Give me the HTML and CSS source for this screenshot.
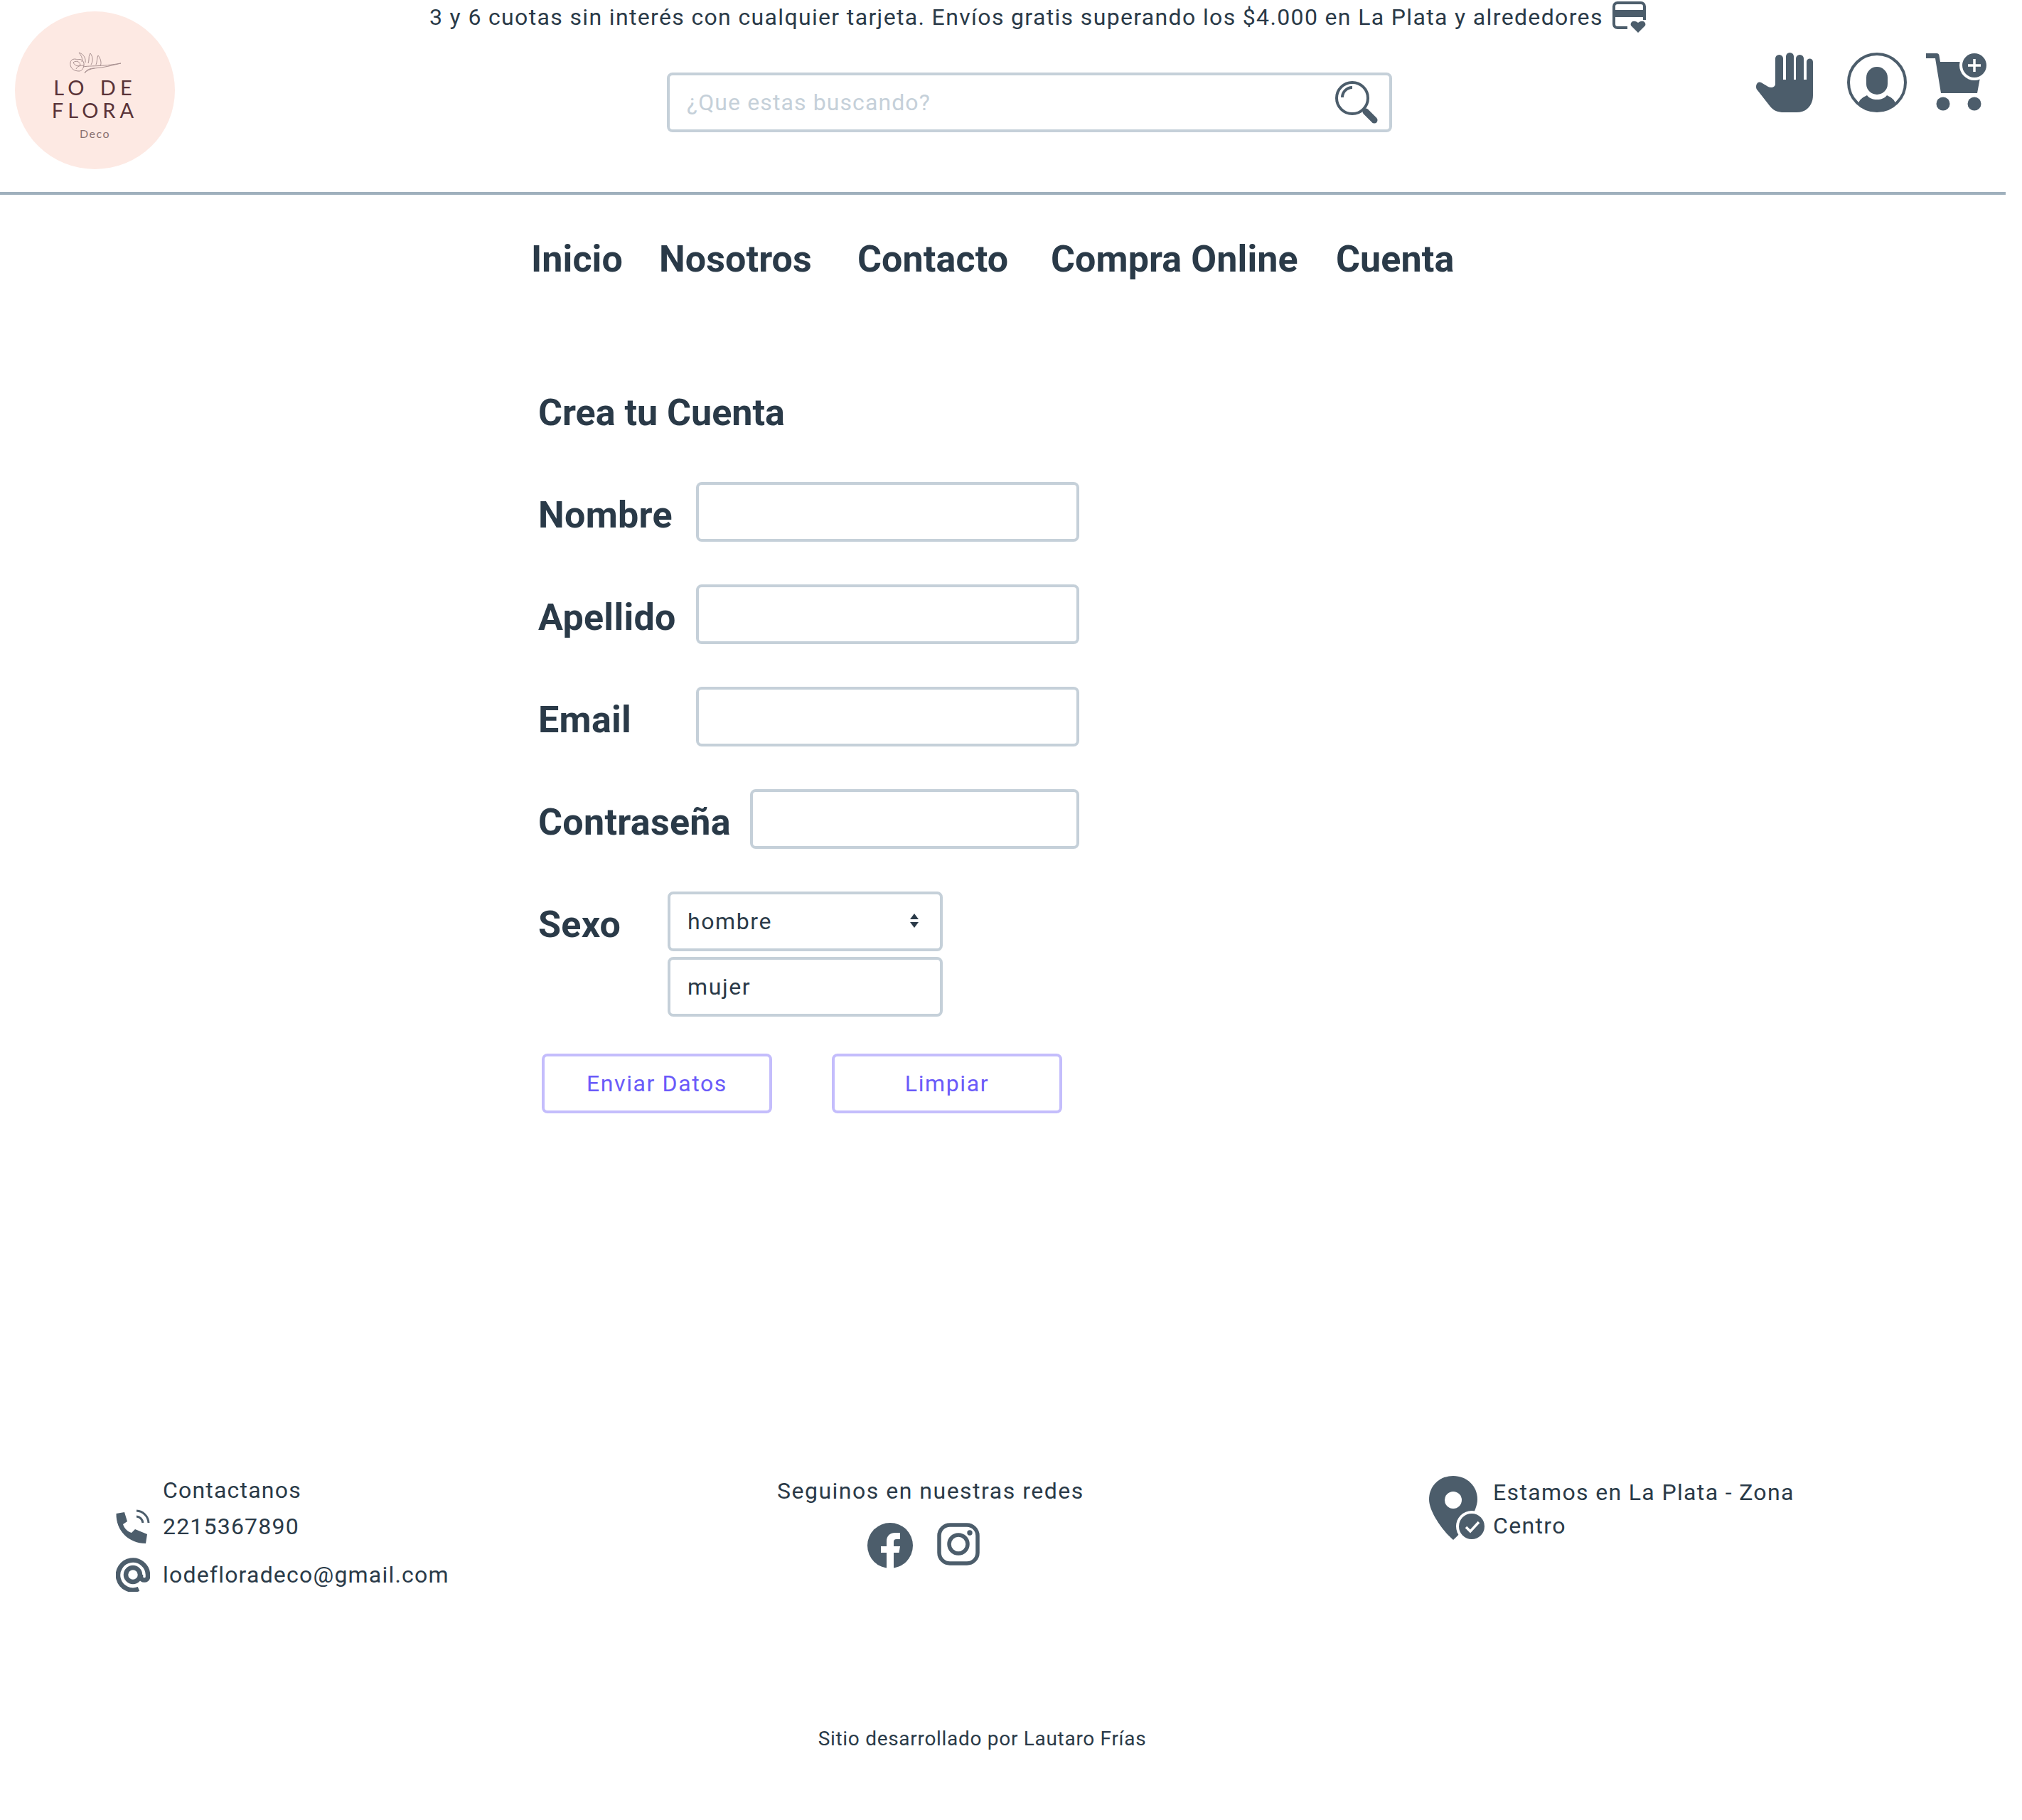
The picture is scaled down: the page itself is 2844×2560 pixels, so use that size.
FILE: index.html
```html
<!DOCTYPE html>
<html lang="es">
<head>
    <meta charset="UTF-8">
    <meta name="viewport" content="width=device-width, initial-scale=1.0">
    <title>Lo de Flora Deco</title>
    <link rel="stylesheet" href="styles.css">
</head>
<body>
    <header class="header">
        <div class="logo">
            <svg class="logo-flower" viewBox="0 0 74 30" width="74" height="30">
                <path d="M14 27C6 27 1 22 2 15C3 10 8 9 12 11C17 9 22 13 21 19C20 24 18 27 14 27Z"/>
                <path d="M6 15C9 12 15 13 16 18C13 21 9 20 6 15ZM10 24C12 20 16 19 21 19"/>
                <path d="M20 21C30 19 45 21 73 16C60 19 50 22 36 23C30 24 25 26 22 30"/>
                <path d="M18 14C20 8 16 4 14 1C20 3 24 8 23 15M27 16C29 10 27 6 30 2C34 7 34 13 31 18M38 18C40 13 39 9 41 5C45 10 46 16 44 20M22 30C24 25 30 23 36 23"/>
            </svg>
            <span class="logo-name">LO DE</span>
            <span class="logo-name">FLORA</span>
            <span class="logo-deco">Deco</span>
        </div>
        <div class="header-center">
            <p class="promo">
                3 y 6 cuotas sin interés con cualquier tarjeta. Envíos gratis superando los $4.000 en La Plata y alrededores
                <svg class="promo-icon" viewBox="0 0 47 44" width="47" height="44">
                    <rect x="2" y="2" width="43" height="35" rx="5" fill="none" stroke="#4c5d6b" stroke-width="4"/>
                    <rect x="2" y="12" width="43" height="10" fill="#4c5d6b"/>
                    <rect x="21" y="26" width="26" height="18" fill="#fff"/>
                    <path d="M36 44L26 34C24 29 30 25 36 30C42 25 48 29 46 34Z" fill="#4c5d6b"/>
                </svg>
            </p>
            <div class="search">
                <input class="search-input" type="text" placeholder="¿Que estas buscando?">
                <svg viewBox="0 0 60 60" width="60" height="60">
                    <circle cx="24" cy="24" r="22" fill="none" stroke="#4c5d6b" stroke-width="4"/>
                    <path d="M10 23A14 14 0 0 1 24 9" fill="none" stroke="#4c5d6b" stroke-width="4"/>
                    <path d="M43 43L55 55" stroke="#4c5d6b" stroke-width="9" stroke-linecap="round"/>
                </svg>
            </div>
        </div>
        <div class="header-icons">
            <svg viewBox="0 0 82 84" width="82" height="84">
                <path fill="#4c5d6b" d="M1.5 45C3 41 6 41 8 42L18 48C22 50 28 49 28 44V8.5a5.5 5.5 0 0 1 11 0V38h4V5.5a5.5 5.5 0 0 1 11 0V38h3V8.5a5.5 5.5 0 0 1 11 0V38h4V13a4.5 4.5 0 0 1 9 0V60C81 74 72 84 58 84H40C32 84 26 82 21 76L3 53C1 51 .5 48 1.5 45Z"/>
            </svg>
            <svg viewBox="0 0 84 84" width="84" height="84">
                <circle cx="42" cy="42" r="40" fill="none" stroke="#4c5d6b" stroke-width="4"/>
                <rect x="27" y="20" width="30" height="39" rx="15" fill="#4c5d6b"/>
                <path fill="#4c5d6b" d="M16 72C17 66 22 63 28 60C31 64 36 66 42 66C48 66 53 64 56 60C62 63 67 66 68 72A40 40 0 0 1 16 72Z"/>
            </svg>
            <svg viewBox="0 0 85 82" width="85" height="82">
                <path fill="#4c5d6b" d="M0 1H15Q18 1 18.5 4L20 13H60L77 30L72 57H21L13 8H0Z"/>
                <circle cx="24" cy="72" r="9.5" fill="#4c5d6b"/>
                <circle cx="68" cy="72" r="9.5" fill="#4c5d6b"/>
                <circle cx="68" cy="18" r="21" fill="#fff"/>
                <circle cx="68" cy="18" r="17" fill="#4c5d6b"/>
                <path d="M68 9V27M59 18H77" stroke="#fff" stroke-width="3.5"/>
            </svg>
        </div>
    </header>

    <nav class="nav">
        <a href="#">Inicio</a>
        <a href="#">Nosotros</a>
        <a href="#">Contacto</a>
        <a href="#">Compra Online</a>
        <a href="#">Cuenta</a>
    </nav>

    <form class="form">
        <h1 class="form-title">Crea tu Cuenta</h1>
        <div class="row row-text">
            <label>Nombre</label>
            <input class="field" type="text">
        </div>
        <div class="row row-text">
            <label>Apellido</label>
            <input class="field" type="text">
        </div>
        <div class="row row-text">
            <label>Email</label>
            <input class="field" type="email">
        </div>
        <div class="row row-pass">
            <label>Contraseña</label>
            <input class="field" type="password">
        </div>
        <div class="row row-sex">
            <label>Sexo</label>
            <div class="sex-options">
                <div class="select-wrap">
                    <select class="field">
                        <option>hombre</option>
                        <option>mujer</option>
                    </select>
                    <svg class="select-arrows" viewBox="0 0 12 20" width="12" height="20">
                        <path d="M6 0L12 8H0ZM6 20L0 12H12Z" fill="#2a3a48"/>
                    </svg>
                </div>
                <input class="field" type="text" value="mujer">
            </div>
        </div>
        <div class="buttons">
            <button class="btn" type="submit">Enviar Datos</button>
            <button class="btn" type="reset">Limpiar</button>
        </div>
    </form>

    <footer class="footer">
        <div class="contact">
            <span></span>
            <span>Contactanos</span>
            <svg viewBox="0 0 48 48" width="48" height="48">
                <path fill="#4c5d6b" d="M.5 6L12 4L16 17L10 21C12 27 16 31 22 33L27 28L44 35L42 48C18 48 0 30 .5 6Z"/>
                <path d="M29 2A18 18 0 0 1 46 19M29 10A10 10 0 0 1 38 19" fill="none" stroke="#4c5d6b" stroke-width="3"/>
            </svg>
            <span>2215367890</span>
            <svg viewBox="0 0 48 48" width="48" height="48">
                <path d="M32 44A21 21 0 1 1 45 24V27C45 33 35 33 35 27V24" fill="none" stroke="#4c5d6b" stroke-width="6.5"/>
                <circle cx="24" cy="24" r="10" fill="none" stroke="#4c5d6b" stroke-width="6.5"/>
            </svg>
            <span>lodefloradeco@gmail.com</span>
        </div>
        <div class="social">
            <p class="social-title">Seguinos en nuestras redes</p>
            <div class="social-icons">
                <svg viewBox="0 0 64 64" width="64" height="64">
                    <circle cx="32" cy="32" r="32" fill="#4c5d6b"/>
                    <path fill="#fff" d="M27 64V42H19V33H27V26C27 18 32 14 39 14H46V23H41C38 23 37 24.5 37 27V33H46L44.5 42H37V64Z"/>
                </svg>
                <svg viewBox="0 0 60 60" width="60" height="60">
                    <rect x="3" y="3" width="54" height="54" rx="15" fill="none" stroke="#4c5d6b" stroke-width="5.5"/>
                    <circle cx="30" cy="30" r="13" fill="none" stroke="#4c5d6b" stroke-width="5.5"/>
                    <circle cx="46" cy="14" r="3.7" fill="#4c5d6b"/>
                </svg>
            </div>
        </div>
        <div class="location">
            <svg viewBox="0 0 82 90" width="82" height="90">
                <path fill="#4c5d6b" d="M34 0C53 0 68 14 68 33C68 50 50 76 34 90C18 76 0 50 0 33C0 14 15 0 34 0Z"/>
                <circle cx="34" cy="34" r="12" fill="#fff"/>
                <circle cx="60" cy="71" r="22" fill="#fff"/>
                <circle cx="60" cy="71" r="18" fill="#4c5d6b"/>
                <path d="M52 72L58 78L70 65" fill="none" stroke="#fff" stroke-width="3.5"/>
            </svg>
            <p>Estamos en La Plata - Zona Centro</p>
        </div>
    </footer>

    <p class="credits">Sitio desarrollado por Lautaro Frías</p>
</body>
</html>
```

FILE: styles.css
```css
body {
    margin: 0;
    width: 2821px;
    background-color: #fff;
    color: #2a3a48;
    font-family: Roboto, sans-serif;
    font-size: 32px;
}
p {
    margin: 0;
}

/* Cabecera */
.header {
    display: flex;
    height: 270px;
    border-bottom: 4px solid #9fb0bd;
}
.logo {
    flex: none;
    width: 225px;
    height: 222px;
    margin: 16px 20px 0 21px;
    border-radius: 50%;
    background-color: #fde9e3;
    display: flex;
    flex-direction: column;
    align-items: center;
    font-family: Lato, sans-serif;
    color: #5a3338;
}
.logo-flower {
    margin-top: 57px;
    margin-bottom: 4px;
    flex: none;
}
.logo-flower path {
    fill: none;
    stroke: #a89090;
    stroke-width: 1;
}
.logo-name {
    font-size: 29px;
    line-height: 32px;
    letter-spacing: 6px;
    word-spacing: 3px;
}
.logo-deco {
    margin-top: 7px;
    font-size: 16px;
    line-height: 20px;
    letter-spacing: 1.5px;
    color: #8a7272;
}
.header-center {
    flex: none;
    width: 2203px;
}
.promo {
    display: flex;
    align-items: flex-start;
    gap: 13px;
    margin-left: 338px;
    height: 102px;
    white-space: nowrap;
    line-height: 48px;
    letter-spacing: 1.35px;
}
.promo-icon {
    margin-top: 2px;
}
.search {
    display: flex;
    align-items: center;
    box-sizing: border-box;
    width: 1020px;
    height: 84px;
    margin-left: 672px;
    padding: 0 16px 0 24px;
    border: 4px solid #c5d0d9;
    border-radius: 8px;
}
.search-input {
    flex: 1;
    border: none;
    outline: none;
    padding: 0;
    font-family: Roboto, sans-serif;
    font-size: 32px;
    letter-spacing: 1.1px;
    color: #2a3a48;
}
.search-input::placeholder {
    color: #c5d0d9;
}
.header-icons {
    display: flex;
    gap: 47px;
    padding-top: 74px;
}
.header-icons svg:nth-child(3) {
    margin-left: -20px;
}

/* Menu */
.nav {
    display: grid;
    grid-template-columns: 180px 279px 272px 401px auto;
    padding: 61px 0 0 747px;
}
.nav a {
    color: #2a3a48;
    font-size: 52px;
    font-weight: 700;
    line-height: 60px;
    text-decoration: none;
    white-space: nowrap;
    letter-spacing: 0.1px;
}

/* Formulario */
.form {
    margin: 156px 0 0 757px;
    width: 761px;
}
.form-title {
    margin: 0 0 67px;
    font-size: 52px;
    font-weight: 700;
    line-height: 60px;
}
.row {
    display: flex;
    margin-bottom: 60px;
}
.row label {
    flex: none;
    height: 84px;
    font-size: 52px;
    font-weight: 700;
    line-height: 94px;
    letter-spacing: 0.3px;
}
.row-text label {
    width: 222px;
}
.row-pass label {
    width: 298px;
}
.row-sex label {
    width: 182px;
}
.row-sex {
    margin-bottom: 52px;
}
.field {
    flex: 1;
    min-width: 0;
    box-sizing: border-box;
    height: 84px;
    padding: 0 24px;
    border: 4px solid #c5d0d9;
    border-radius: 8px;
    background-color: #fff;
    font-family: Roboto, sans-serif;
    font-size: 32px;
    color: #2a3a48;
    letter-spacing: 1.6px;
    outline: none;
}
.sex-options {
    display: flex;
    flex-direction: column;
    gap: 8px;
    width: 387px;
}
.sex-options .field {
    flex: none;
    width: 387px;
}
.select-wrap {
    position: relative;
    height: 84px;
}
select.field {
    appearance: none;
}
.select-arrows {
    position: absolute;
    top: 31px;
    right: 34px;
}
.buttons {
    display: flex;
    gap: 84px;
    margin-left: 5px;
}
.btn {
    box-sizing: border-box;
    width: 324px;
    height: 84px;
    border: 4px solid #c4bdfc;
    border-radius: 8px;
    background-color: #fff;
    color: #6a5af9;
    font-family: Roboto, sans-serif;
    font-size: 32px;
    letter-spacing: 1.6px;
}

/* Pie */
.footer {
    display: grid;
    grid-template-columns: 930px 917px auto;
    margin-top: 504px;
    padding-left: 163px;
}
.contact {
    display: grid;
    grid-template-columns: 66px auto;
    grid-template-rows: 51px 51px 86px;
    justify-content: start;
    align-items: center;
    letter-spacing: 1.2px;
}
.social {
    margin-top: 2px;
}
.social-title {
    line-height: 50px;
    letter-spacing: 1.5px;
}
.social-icons {
    display: flex;
    align-items: flex-start;
    gap: 34px;
    margin: 20px 0 0 127px;
}
.location {
    display: flex;
    gap: 8px;
    margin-top: 6px;
}
.location p {
    width: 430px;
    line-height: 47px;
    letter-spacing: 1.35px;
}
.credits {
    margin-top: 168px;
    padding-right: 58px;
    text-align: center;
    font-size: 28px;
    line-height: 40px;
    letter-spacing: 0.7px;
}
```
